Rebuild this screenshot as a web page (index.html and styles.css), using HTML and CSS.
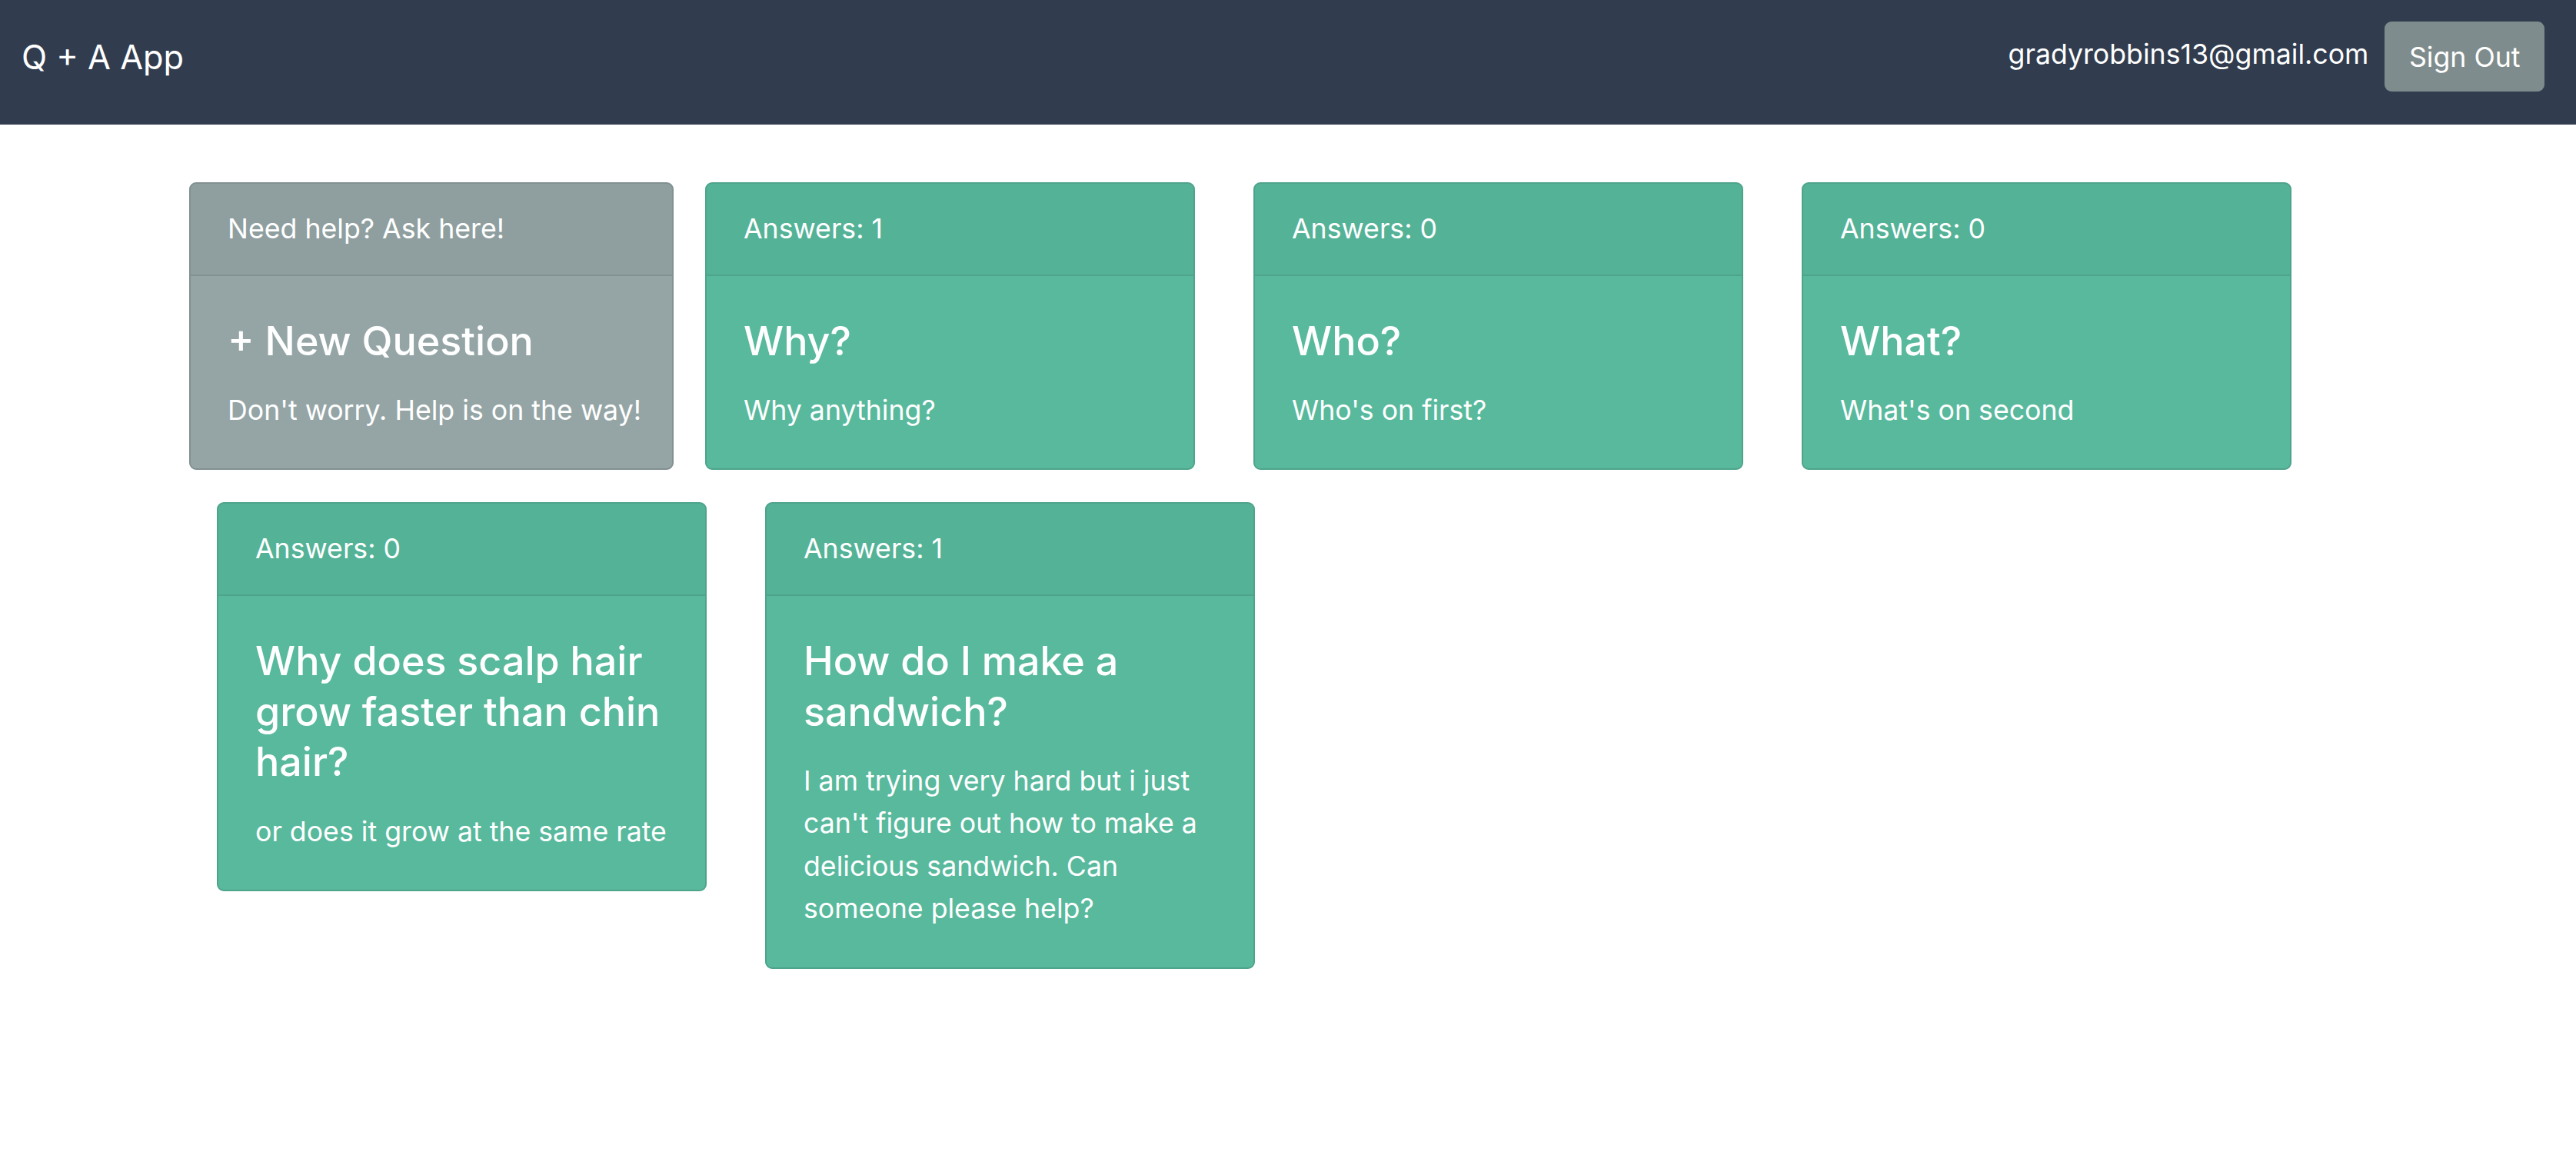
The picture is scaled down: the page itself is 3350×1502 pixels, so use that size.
FILE: index.html
```html
<!DOCTYPE html>
<html lang="en">
<head>
<meta charset="utf-8">
<title>Q + A App</title>
<link rel="stylesheet" href="styles.css">
</head>
<body>
<nav class="navbar">
  <span class="brand">Q + A App</span>
  <div class="user">
    <span class="email">gradyrobbins13@gmail.com</span>
    <button class="btn-signout" type="button">Sign Out</button>
  </div>
</nav>
<main class="board">
  <div class="card card-new">
    <div class="card-header">Need help? Ask here!</div>
    <div class="card-body">
      <h4 class="card-title">+ New Question</h4>
      <p class="card-text">Don't worry. Help is on the way!</p>
    </div>
  </div>
  <div class="card">
    <div class="card-header">Answers: 1</div>
    <div class="card-body">
      <h4 class="card-title">Why?</h4>
      <p class="card-text">Why anything?</p>
    </div>
  </div>
  <div class="card">
    <div class="card-header">Answers: 0</div>
    <div class="card-body">
      <h4 class="card-title">Who?</h4>
      <p class="card-text">Who's on first?</p>
    </div>
  </div>
  <div class="card">
    <div class="card-header">Answers: 0</div>
    <div class="card-body">
      <h4 class="card-title">What?</h4>
      <p class="card-text">What's on second</p>
    </div>
  </div>
  <div class="card">
    <div class="card-header">Answers: 0</div>
    <div class="card-body">
      <h4 class="card-title">Why does scalp hair grow faster than chin hair?</h4>
      <p class="card-text">or does it grow at the same rate</p>
    </div>
  </div>
  <div class="card">
    <div class="card-header">Answers: 1</div>
    <div class="card-body">
      <h4 class="card-title">How do I make a sandwich?</h4>
      <p class="card-text">I am trying very hard but i just can't figure out how to make a delicious sandwich. Can someone please help?</p>
    </div>
  </div>
</main>
</body>
</html>
```
FILE: styles.css
```css
html, body {
  margin: 0;
  padding: 0;
  background: #ffffff;
}

body {
  font-family: Inter, "Noto Sans", "Liberation Sans", sans-serif;
  font-size: 35.7px;
  line-height: 55.5px;
  color: #ffffff;
}

.navbar {
  box-sizing: border-box;
  height: 162px;
  background: #313d4f;
  display: flex;
  align-items: center;
  justify-content: space-between;
  padding: 0 41px 0 28px;
}

.brand {
  font-size: 43.3px;
  line-height: 63px;
  margin-bottom: 13px;
}

.user {
  display: flex;
  align-items: center;
  margin-bottom: 15px;
}

.email {
  margin-right: 21px;
  margin-bottom: 6px;
}

.btn-signout {
  font: inherit;
  color: #ffffff;
  background: #7f8c8d;
  border: 0;
  border-radius: 9px;
  padding: 19px 31.5px 16.5px;
  cursor: pointer;
}

.board {
  display: flex;
  flex-wrap: wrap;
  align-items: flex-start;
  padding: 75px 244px 0;
}

.card {
  box-sizing: border-box;
  width: 637px;
  margin: 0 38px 42px;
  background: #58b99d;
  border: 2px solid #4ea48b;
  border-radius: 9px;
  overflow: hidden;
}

.card-new {
  width: 630px;
  margin: 0 3px 42px 2px;
  background: #95a5a6;
  border-color: #829091;
}

.card-header {
  padding: 31px 38px 31px 48px;
  background: rgba(0, 0, 0, 0.035);
  border-bottom: 2px solid #4ea48b;
}

.card-new .card-header {
  border-bottom-color: #829091;
}

.card-body {
  padding: 52px 38px 48px 48px;
}

.card-title {
  margin: 0 0 29.5px;
  font-size: 52px;
  line-height: 65.8px;
  font-weight: 500;
}

.card-text {
  margin: 0;
}
```
